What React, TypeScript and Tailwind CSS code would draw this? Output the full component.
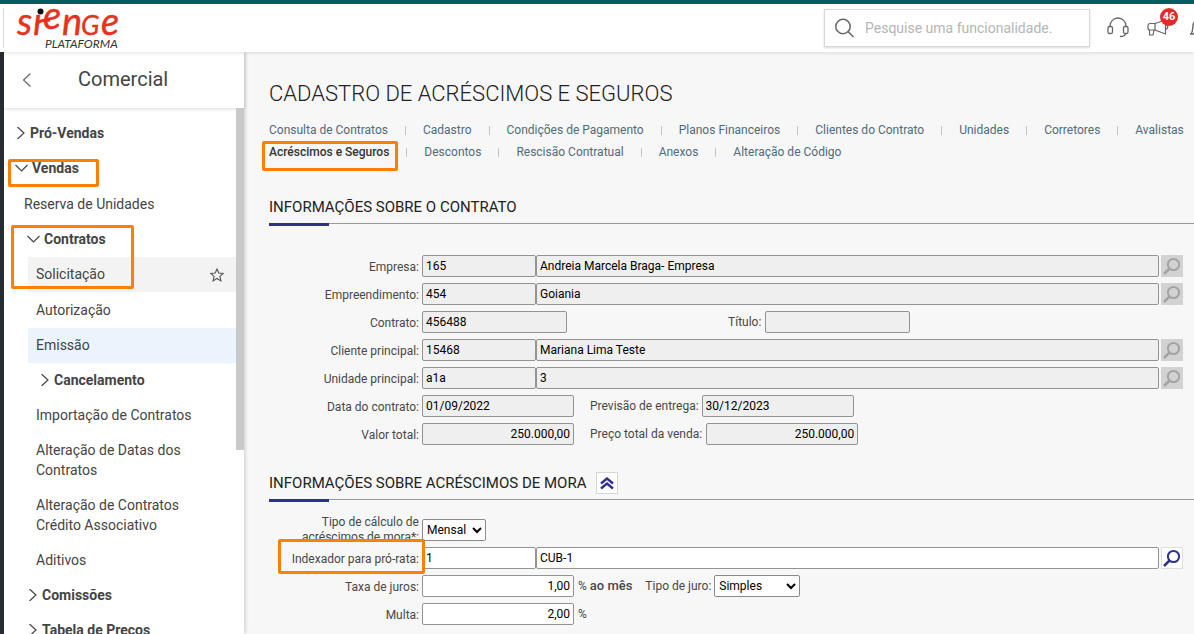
import React from 'react';

const tabRows = [
  [
    'Consulta de Contratos',
    'Cadastro',
    'Condições de Pagamento',
    'Planos Financeiros',
    'Clientes do Contrato',
    'Unidades',
    'Corretores',
    'Avalistas',
  ],
  ['Acréscimos e Seguros', 'Descontos', 'Rescisão Contratual', 'Anexos', 'Alteração de Código'],
];

const activeTab = 'Acréscimos e Seguros';

// orange frame used to call out a step
const Highlight = ({ className }) => (
  <span
    aria-hidden="true"
    className={`pointer-events-none absolute z-20 rounded-[2px] border-3 border-[#ff8000] ${className}`}
  />
);

const Logo = () => (
  <svg className="overflow-visible" width="108" height="46" viewBox="0 0 108 46" role="img" aria-label="Sienge Plataforma">
    <g fill="#e8301c" stroke="#e8301c" strokeWidth="0.4" fontFamily="Lato, sans-serif" fontStyle="italic" fontSize="38">
      <text x="1" y="30">s</text>
      <text x="17" y="30">ı</text>
      <text x="27" y="24">e</text>
      <text x="46" y="30">n</text>
      <text x="65" y="30" fontSize="27">G</text>
      <text x="85" y="30">e</text>
    </g>
    <path d="M20 20 C24 14 29 16 34 15" fill="none" stroke="#e8301c" strokeWidth="3" />
    <circle cx="24.500" cy="6.500" r="3" fill="#111" />
    <text x="29" y="43" fill="#333" fontFamily="Lato, sans-serif" fontStyle="italic" fontSize="12">
      PLATAFORMA
    </text>
  </svg>
);

const HeadsetIcon = () => (
  <svg width="22" height="22" viewBox="0 0 22 22" fill="none" stroke="#666" strokeWidth="1.3">
    <path d="M3 10 V9 A8 8 0 0 1 19 9 V10" />
    <rect x="1" y="9.500" width="4.500" height="7" rx="1.500" />
    <rect x="16.500" y="9.500" width="4.500" height="7" rx="1.500" />
    <path d="M18.500 16.500 C18.500 19 16.500 19.500 13 19.500" />
  </svg>
);

const MegaphoneIcon = () => (
  <svg width="22" height="20" viewBox="0 0 22 20" fill="none" stroke="#666" strokeWidth="1.2" strokeLinejoin="round">
    <path d="M8 5.500 H3 A2 2 0 0 0 1 7.500 V10 A2 2 0 0 0 3 12 H8 Z" />
    <path d="M8 5.500 L18.500 2 V16 L8 12" />
    <path d="M18.500 7 C21.500 7 21.500 11 18.500 11" />
    <path d="M2.500 12 V17 H6 L7 12" />
  </svg>
);

const BellIcon = () => (
  <svg className="shrink-0" width="20" height="20" viewBox="0 0 20 20" fill="none" stroke="#666" strokeWidth="1.4">
    <path d="M1 16 H19 M2 16 C4 14 3.500 10 4 8 A6 6 0 0 1 16 8 C16.500 10 16 14 18 16" />
  </svg>
);

const Chevron = ({ open = false }) =>
  open ? (
    <svg className="shrink-0" width="13" height="12" viewBox="0 0 13 12" fill="none" stroke="#444" strokeWidth="1.2">
      <path d="M0.500 3 L6.500 9 L12.500 3" />
    </svg>
  ) : (
    <svg className="shrink-0" width="11" height="12" viewBox="0 0 11 12" fill="none" stroke="#444" strokeWidth="1.2">
      <path d="M2.500 0 L9 6 L2.500 12" />
    </svg>
  );

const SearchButton = ({ label, disabled = false }) => (
  <button
    type="button"
    aria-label={label}
    disabled={disabled}
    className={`ml-0.5 flex size-[22px] shrink-0 items-center justify-center ${
      disabled ? 'bg-[#d2d2d2] text-[#a3a3a3]' : 'border border-[#dedede] bg-white text-[#2b3190]'
    }`}
  >
    <svg
      className="shrink-0"
      width="20"
      height="20"
      viewBox="0 0 20 20"
      fill="none"
      stroke="currentColor"
      strokeWidth="2"
    >
      <circle cx="11.500" cy="8.500" r="5.600" />
      <path d="M7.500 12.500 L2 18" strokeWidth="2.500" />
    </svg>
  </button>
);

const Field = ({ id, value, label = undefined, editable = false, className }) => (
  <input
    id={id}
    aria-label={label}
    defaultValue={value}
    readOnly={!editable}
    className={`h-[22px] rounded-[2px] border border-[#939393] px-[3px] pb-px text-xs text-black outline-none ${
      editable ? 'bg-white' : 'bg-[#efefef]'
    } ${className}`}
  />
);

const RowLabel = ({ htmlFor, children }) => (
  <label htmlFor={htmlFor} className="mr-[3px] w-[150px] shrink-0 pt-0.5 text-right">
    {children}
  </label>
);

const LookupRow = ({ id, label, code, name, editable = false, highlighted = false }) => (
  <div className="relative flex items-center">
    {highlighted && <Highlight className="-top-2 left-[9px] h-[35px] w-[147px]" />}
    <RowLabel htmlFor={id}>{label}</RowLabel>
    <Field id={id} value={code} editable={editable} className="w-[114px]" />
    <Field id={`${id}-nome`} label={`${label} nome`} value={name} editable={editable} className="min-w-0 flex-1" />
    <SearchButton label={`Pesquisar ${label}`} disabled={!editable} />
  </div>
);

const SectionTitle = ({ title, children = null }) => (
  <>
    <div className="flex h-[27px] items-center gap-2.5 pb-[5px]">
      <h2 className="pt-0.5 text-[15px] text-[#222]">{title}</h2>
      {children}
    </div>
    <div className="flex h-[3px] items-start">
      <div className="h-full w-15 bg-[#2b3190]" />
      <div className="h-px flex-1 bg-[#999]" />
    </div>
  </>
);

const MenuGroup = ({ label, open = false, className }) => (
  <button
    type="button"
    aria-expanded={open}
    className={`flex h-[35px] w-full items-center gap-1 pb-0.5 font-bold ${className}`}
  >
    <Chevron open={open} />
    {label}
  </button>
);

const MenuLink = ({ label, className = 'pb-0.5' }) => (
  <a href="#" className={`ml-6 flex min-h-[35px] items-center pr-8 pl-2 leading-5 ${className}`}>
    {label}
  </a>
);

const Header = () => (
  <header className="relative z-30 flex h-[52px] shrink-0 items-center border-t-4 border-[#035d62] bg-white shadow-[0_1px_4px_rgba(0,0,0,0.12)]">
    <div className="ml-[3px] h-10 w-px bg-[#ddd]" />
    <a href="#" className="ml-3">
      <Logo />
    </a>
    <div className="ml-auto flex h-full shrink-0 items-center">
      <label className="flex h-[38px] w-[266px] items-center border border-[#d8d8d8] pl-2.5 shadow-[0_1px_2px_rgba(0,0,0,0.15)]">
        <svg width="20" height="20" viewBox="0 0 20 20" fill="none" stroke="#666" strokeWidth="1.500">
          <circle cx="8" cy="8.500" r="7.200" />
          <path d="M13 13.500 L18.500 19" />
        </svg>
        <input
          type="search"
          aria-label="Pesquisar"
          placeholder="Pesquise uma funcionalidade."
          className="ml-2.5 min-w-0 flex-1 text-sm outline-none placeholder:text-[#b5b5b5]"
        />
      </label>
      <button type="button" aria-label="Suporte" className="ml-[17px]">
        <HeadsetIcon />
      </button>
      <button type="button" aria-label="Novidades" className="relative ml-[18px]">
        <MegaphoneIcon />
        <span className="absolute -top-2.5 left-[13px] flex size-[18px] items-center justify-center rounded-full bg-[#e52a2a] text-[11px] font-bold text-white">
          46
        </span>
      </button>
      <button type="button" aria-label="Notificações" className="ml-5 flex w-[5px] overflow-hidden">
        <BellIcon />
      </button>
    </div>
  </header>
);

const Sidebar = () => (
  <aside className="z-10 flex w-[244px] shrink-0 flex-col border-l-4 border-[#272b33] bg-white shadow-[1px_0_4px_rgba(0,0,0,0.18)]">
    <div className="flex h-14 shrink-0 items-center shadow-[0_1px_4px_rgba(0,0,0,0.15)]">
      <button type="button" aria-label="Voltar" className="ml-[18px]">
        <svg width="10" height="16" viewBox="0 0 10 16" fill="none" stroke="#666" strokeWidth="1.200">
          <path d="M8.500 1.500 L1.500 8 L8.500 14.500" />
        </svg>
      </button>
      <h2 className="ml-[46px] pb-0.5 text-xl text-[#444]">Comercial</h2>
    </div>
    <div className="flex min-h-0 flex-1">
      <nav className="min-w-0 flex-1 pt-2 text-sm text-[#444]">
        <MenuGroup label="Pró-Vendas" className="pl-[11px]" />
        <div className="relative">
          <MenuGroup label="Vendas" open className="pl-[11px]" />
          <Highlight className="top-2 left-1 h-7 w-[91px]" />
        </div>
        <a href="#" className="mt-px flex h-[35px] items-center pb-0.5 pl-5">
          Reserva de Unidades
        </a>
        <div className="relative">
          <MenuGroup label="Contratos" open className="pl-[23px]" />
          <Highlight className="top-[3px] left-[7px] h-16 w-[123px]" />
          <div className="mb-px ml-6 flex h-[35px] items-center justify-between bg-[#f3f3f3] pr-3 pl-2">
            <a href="#" className="pb-0.5">
              Solicitação
            </a>
            <button type="button" aria-label="Favoritar">
              <svg width="14" height="14" viewBox="0 0 14 14" fill="none" stroke="#555" strokeWidth="1.100">
                <path d="M7 1 L8.800 5 L13.300 5.400 L9.900 8.400 L10.900 12.900 L7 10.500 L3.100 12.900 L4.100 8.400 L0.700 5.400 L5.200 5 Z" />
              </svg>
            </button>
          </div>
        </div>
        <MenuLink label="Autorização" />
        <MenuLink label="Emissão" className="bg-[#ebf3fc] pb-0.5" />
        <MenuGroup label="Cancelamento" className="pl-[35px]" />
        <MenuLink label="Importação de Contratos" />
        <MenuLink label="Alteração de Datas dos Contratos" className="pt-[7px] pb-2" />
        <MenuLink label="Alteração de Contratos Crédito Associativo" className="pt-[7px] pb-2" />
        <MenuLink label="Aditivos" />
        <MenuGroup label="Comissões" className="pl-[23px]" />
        <MenuGroup label="Tabela de Preços" className="pl-[23px]" />
      </nav>
      <div className="h-[342px] w-2 shrink-0 bg-[#c9c9c9]" />
    </div>
  </aside>
);

const Tabs = () => (
  <nav className="mt-[11px] text-xs text-[#4f6b7d]">
    {tabRows.map((row) => (
      <ul key={row[0]} className="flex h-[22px] items-center">
        {row.map((tab, i) => (
          <li key={tab} className="relative flex items-center whitespace-nowrap">
            {i > 0 && <span className="mx-[17px] h-[9px] w-px bg-[#c4c4c4]" />}
            <a href="#" className={tab === activeTab ? 'font-medium text-[#333]' : ''}>
              {tab}
            </a>
            {tab === activeTab && <Highlight className="-top-[3px] -left-[7px] h-[30px] w-[136px]" />}
          </li>
        ))}
      </ul>
    ))}
  </nav>
);

const ContractInfo = () => (
  <section className="mt-[33px]">
    <SectionTitle title="INFORMAÇÕES SOBRE O CONTRATO" />
    <div className="mt-[29px] flex flex-col gap-1.5 pr-[11px]">
      <LookupRow id="empresa" label="Empresa:" code="165" name="Andreia Marcela Braga- Empresa" />
      <LookupRow id="empreendimento" label="Empreendimento:" code="454" name="Goiania" />
      <div className="flex items-center">
        <RowLabel htmlFor="contrato">Contrato:</RowLabel>
        <Field id="contrato" value="456488" className="w-[145px]" />
        <label htmlFor="titulo" className="mr-1 ml-[161px]">
          Título:
        </label>
        <Field id="titulo" value="" className="w-[145px]" />
      </div>
      <LookupRow id="cliente" label="Cliente principal:" code="15468" name="Mariana Lima Teste" />
      <LookupRow id="unidade" label="Unidade principal:" code="a1a" name="3" />
      <div className="flex items-center">
        <RowLabel htmlFor="data">Data do contrato:</RowLabel>
        <Field id="data" value="01/09/2022" className="w-[152px]" />
        <label htmlFor="previsao" className="mr-[3px] ml-4">
          Previsão de entrega:
        </label>
        <Field id="previsao" value="30/12/2023" className="w-[152px]" />
      </div>
      <div className="flex items-center">
        <RowLabel htmlFor="valor">Valor total:</RowLabel>
        <Field id="valor" value="250.000,00" className="w-[152px] text-right" />
        <label htmlFor="preco" className="mr-1 ml-4">
          Preço total da venda:
        </label>
        <Field id="preco" value="250.000,00" className="w-[152px] text-right" />
      </div>
    </div>
  </section>
);

const LateFees = () => (
  <section className="mt-[27px]">
    <SectionTitle title="INFORMAÇÕES SOBRE ACRÉSCIMOS DE MORA">
      <button
        type="button"
        aria-label="Recolher"
        className="flex size-[22px] items-center justify-center border border-[#d6d6d6] bg-white"
      >
        <svg width="14" height="14" viewBox="0 0 14 14" fill="none" stroke="#2b3190" strokeWidth="2.400">
          <path d="M1 7.500 L7 2.500 L13 7.500" />
          <path d="M1 12.500 L7 7.500 L13 12.500" />
        </svg>
      </button>
    </SectionTitle>
    <div className="mt-3 flex flex-col gap-1.5 pr-[11px]">
      <div className="flex h-[27px] items-end">
        <label
          htmlFor="tipo-calculo"
          className="mr-[3px] h-[26px] w-[150px] shrink-0 self-start overflow-hidden pt-px pl-6 text-right leading-[15px]"
        >
          Tipo de cálculo de acréscimos de mora*:
        </label>
        <select
          id="tipo-calculo"
          className="h-[22px] w-16 rounded-[2px] border border-[#8a8a8a] bg-white text-xs text-black"
        >
          <option>Mensal</option>
        </select>
      </div>
      <LookupRow id="indexador" label="Indexador para pró-rata:" code="1" name="CUB-1" editable highlighted />
      <div className="flex items-center">
        <RowLabel htmlFor="juros">Taxa de juros:</RowLabel>
        <Field id="juros" value="1,00" editable className="w-[152px] text-right" />
        <span className="ml-1">
          % <span className="text-[13px] font-medium">ao mês</span>
        </span>
        <label htmlFor="tipo-juro" className="mr-[3px] ml-[13px]">
          Tipo de juro:
        </label>
        <select
          id="tipo-juro"
          className="h-[22px] w-[86px] rounded-[2px] border border-[#8a8a8a] bg-white text-xs text-black"
        >
          <option>Simples</option>
        </select>
      </div>
      <div className="flex items-center">
        <RowLabel htmlFor="multa">Multa:</RowLabel>
        <Field id="multa" value="2,00" editable className="w-[152px] text-right" />
        <span className="ml-1">%</span>
      </div>
    </div>
  </section>
);

export default function App() {
  return (
    <div className="flex h-screen flex-col overflow-hidden bg-[#f7f7f7] font-[Roboto,sans-serif]">
      <Header />
      <div className="flex min-h-0 flex-1">
        <Sidebar />
        <main className="min-w-0 flex-1 overflow-hidden pl-[25px] text-xs text-[#484848]">
          <h1 className="mt-7 text-[22px] leading-7 font-light text-[#222]">CADASTRO DE ACRÉSCIMOS E SEGUROS</h1>
          <Tabs />
          <ContractInfo />
          <LateFees />
        </main>
      </div>
    </div>
  );
}
